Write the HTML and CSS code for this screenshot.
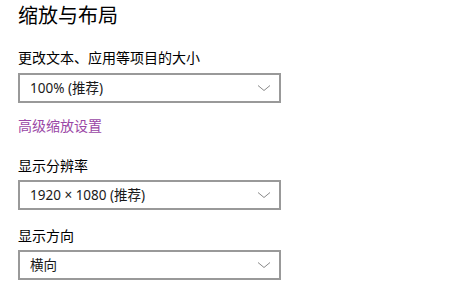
FILE: index.html
```html
<!DOCTYPE html>
<html lang="zh-CN">
<head>
<meta charset="utf-8">
<link rel="stylesheet" href="styles.css">
</head>
<body>
<div class="page">
  <h1 class="title">缩放与布局</h1>
  <div class="label label-first">更改文本、应用等项目的大小</div>
  <div class="select">
    <span class="select-text">100% (推荐)</span>
    <svg class="chev" width="14" height="8" viewBox="0 0 14 8"><path d="M1 1.5 L7 6.5 L13 1.5" fill="none" stroke="#8a8a8a" stroke-width="1"/></svg>
  </div>
  <a class="link">高级缩放设置</a>
  <div class="label label-section">显示分辨率</div>
  <div class="select">
    <span class="select-text">1920 × 1080 (推荐)</span>
    <svg class="chev" width="14" height="8" viewBox="0 0 14 8"><path d="M1 1.5 L7 6.5 L13 1.5" fill="none" stroke="#8a8a8a" stroke-width="1"/></svg>
  </div>
  <div class="label label-section2">显示方向</div>
  <div class="select">
    <span class="select-text">横向</span>
    <svg class="chev" width="14" height="8" viewBox="0 0 14 8"><path d="M1 1.5 L7 6.5 L13 1.5" fill="none" stroke="#8a8a8a" stroke-width="1"/></svg>
  </div>
</div>
</body>
</html>
```
FILE: styles.css
```css
html, body {
  margin: 0;
  padding: 0;
  background: #fff;
}
.page {
  display: flex;
  flex-direction: column;
  align-items: flex-start;
  padding-left: 18px;
  font-family: "Noto Sans", "Noto Sans CJK SC", sans-serif;
  color: #000;
}
.title {
  margin: 0;
  font-size: 20px;
  line-height: 30px;
  font-weight: 400;
  font-family: "Noto Sans CJK SC", sans-serif;
}
.label {
  font-size: 14px;
  line-height: 20px;
  font-family: "Noto Sans CJK SC", sans-serif;
}
.label-first { margin-top: 17px; }
.label-section { margin-top: 20px; }
.label-section2 { margin-top: 15px; }
.select {
  box-sizing: border-box;
  width: 263px;
  height: 30px;
  border: 2px solid #999;
  margin-top: 6px;
  display: flex;
  align-items: center;
  justify-content: space-between;
  padding: 0 8px 0 10px;
}
.label-section + .select,
.label-section2 + .select { margin-top: 5px; }
.select-text {
  font-size: 13.5px;
  line-height: 20px;
  color: #1a1a1a;
}
.chev { display: block; }
.link {
  margin-top: 12px;
  font-size: 14px;
  line-height: 20px;
  color: #9a47a6;
  font-family: "Noto Sans CJK SC", sans-serif;
}
```
